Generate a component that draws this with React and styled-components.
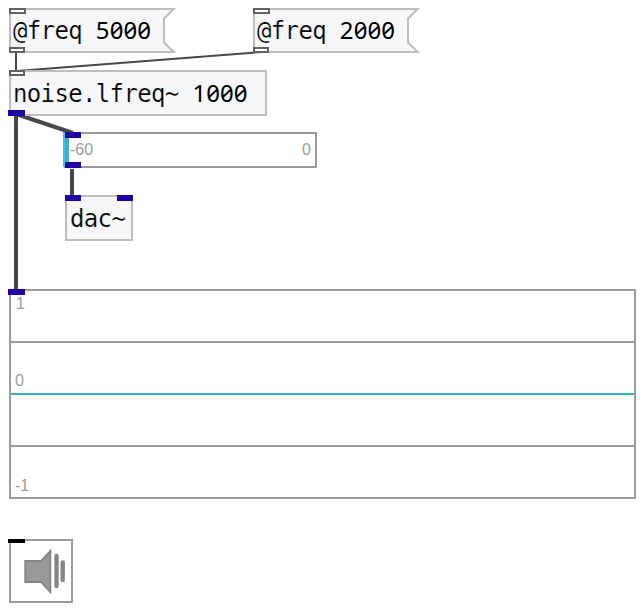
import React from "react";
import styled, { createGlobalStyle } from "styled-components";

const BLUE = "#2200a4";

const GlobalStyle = createGlobalStyle`
  body { margin: 0; background: #fff; }
`;

const Patch = styled.main`
  position: relative;
  width: 640px;
  height: 608px;
  overflow: hidden;
  background: #fff;
`;

const Wires = styled.svg`
  position: absolute;
  inset: 0;
`;

/* A node sits freely on the patch canvas; its ports and body flow inside it. */
const Node = styled.section`
  position: absolute;
  left: ${(p) => p.$x}px;
  top: ${(p) => p.$y}px;
  width: ${(p) => p.$w}px;
  height: ${(p) => p.$h}px;
  display: grid;
  grid-template-rows: 6px 1fr 6px;
`;

const ObjectBox = styled(Node)`
  box-shadow: inset 0 0 0 2px #bdbdbd;
  background: #f6f7f9;
`;

const Frame = styled(Node)`
  box-shadow: inset 0 0 0 2px #9b9b9b;
  background: #fff;
`;

const MessageShape = styled.svg`
  position: absolute;
  inset: 0;
  z-index: -1;
`;

const MessageNode = styled(Node)`
  isolation: isolate;
`;

const Ports = styled.div`
  display: flex;
  justify-content: space-between;
  margin-left: ${(p) => p.$shift || 0}px;
`;

const Port = styled.i`
  box-sizing: border-box;
  width: ${(p) => (p.$narrow ? 16 : 17)}px;
  height: 6px;
  border: 2px solid ${(p) => p.$color || "#626262"};
  background: ${(p) => p.$color || "#fff"};
`;

const ShortPort = styled(Port)`
  height: 4px;
`;

const Code = styled.span`
  align-self: center;
  padding: ${(p) => p.$pad || "0 0 0 4px"};
  white-space: pre;
  color: #000;
  font: 24px/28px "DejaVu Sans Mono", monospace;
  letter-spacing: -0.65px;
  -webkit-text-stroke: 0.18px #f6f7f9;
`;

const Digits = styled.span`
  font-family: "Noto Sans", sans-serif;
  line-height: 1;
  letter-spacing: 0.1px;
  font-feature-settings: "zero";
  -webkit-text-stroke: 0;
`;

const Label = styled.span`
  color: #9c9c9c;
  font: 16px/18px "Liberation Sans", Arial, sans-serif;
`;

const MeterBody = styled.div`
  grid-area: 1 / 1 / -1 / -1;
  display: flex;
  align-items: center;
  justify-content: space-between;
  padding-right: 6px;
`;

const Level = styled.div`
  box-sizing: border-box;
  flex: none;
  align-self: stretch;
  width: 6px;
  margin: 0 1px 1px -1px;
  border-left: 2px solid #38c4e4;
  background: #43adcc;
`;

const Minimum = styled(Label)`
  flex: 1;
`;

const MeterInlets = styled(Ports)`
  grid-area: 1 / 1;
  z-index: 1;
`;

const MeterOutlets = styled(Ports)`
  grid-area: 3 / 1;
  z-index: 1;
`;

const ScopeBody = styled.div`
  grid-row: 2 / -1;
  display: grid;
  grid-template-rows: 48px 52px 52px 50px;
  padding: 0 2px 2px;
`;

const Band = styled.div`
  box-sizing: border-box;
  display: flex;
  align-items: ${(p) => p.$align || "flex-end"};
  padding: ${(p) => p.$pad || "0"};
  border-bottom: ${(p) => (p.$line ? `2px solid ${p.$line}` : "0")};
`;

const Speaker = styled.svg`
  margin: -4px 0 0 2px;
`;

function Message({ x, name, value }) {
  return (
    <MessageNode $x={x} $y={8} $w={167} $h={45}>
      <MessageShape width="167" height="46">
        <path
          d="M1 1H164.8L155 10.5V34.5L164.8 44H1Z"
          fill="#f6f7f9"
          stroke="#bdbdbd"
          strokeWidth="2"
        />
      </MessageShape>
      <Ports $shift={-0.4}><Port /></Ports>
      <Code>{name} <Digits>{value}</Digits></Code>
      <Ports $shift={-0.4}><Port $narrow /></Ports>
    </MessageNode>
  );
}

export default function App() {
  return (
    <>
      <GlobalStyle />
      <Patch>
        <Wires width="640" height="608">
          <g fill="none" stroke="#484848">
            <path d="M16 53V71M261 52L17 71" strokeWidth="2" />
            <path d="M16 115V290M16 114L73 133M72 169V196" strokeWidth="4" />
          </g>
        </Wires>
        <Message x={9} name="@freq" value="5000" />
        <Message x={253} name="@freq" value="2000" />
        <ObjectBox $x={9} $y={70} $w={258} $h={46}>
          <Ports><Port $narrow /></Ports>
          <Code $pad="2px 0 0 4px">noise.lfreq~ <Digits>1000</Digits></Code>
          <Ports $shift={-1}><Port $color={BLUE} /></Ports>
        </ObjectBox>
        <Frame $x={64} $y={132} $w={253} $h={36}>
          <MeterBody>
            <Level />
            <Minimum>-60</Minimum>
            <Label>0</Label>
          </MeterBody>
          <MeterInlets $shift={1}><Port $color={BLUE} $narrow /></MeterInlets>
          <MeterOutlets $shift={1}><Port $color={BLUE} $narrow /></MeterOutlets>
        </Frame>
        <ObjectBox $x={65} $y={195} $w={68} $h={46}>
          <Ports>
            <Port $color={BLUE} $narrow />
            <Port $color={BLUE} $narrow />
          </Ports>
          <Code $pad="2px 0 0 5px">dac~</Code>
        </ObjectBox>
        <Frame $x={9} $y={289} $w={627} $h={210}>
          <Ports $shift={-1}><Port $color={BLUE} /></Ports>
          <ScopeBody>
            <Band $align="flex-start" $pad="0 5px" $line="#9b9b9b"><Label>1</Label></Band>
            <Band $pad="0 4px 3px" $line="#38b1cc"><Label>0</Label></Band>
            <Band $line="#9b9b9b" />
            <Band $pad="0 4px 2px"><Label>-1</Label></Band>
          </ScopeBody>
        </Frame>
        <Frame $x={9} $y={539} $w={64} $h={64}>
          <Ports $shift={-1}><ShortPort $color="#000" /></Ports>
          <Speaker width="60" height="56">
            <path
              d="M14.3 20H30.3L39.3 10V51L30.3 41H14.3Z"
              fill="#999"
              stroke="#858585"
              strokeWidth="2"
            />
            <path d="M45.5 15V45M51.7 21.5V39" stroke="#858585" strokeWidth="4.4" strokeLinecap="round" />
          </Speaker>
        </Frame>
      </Patch>
    </>
  );
}
